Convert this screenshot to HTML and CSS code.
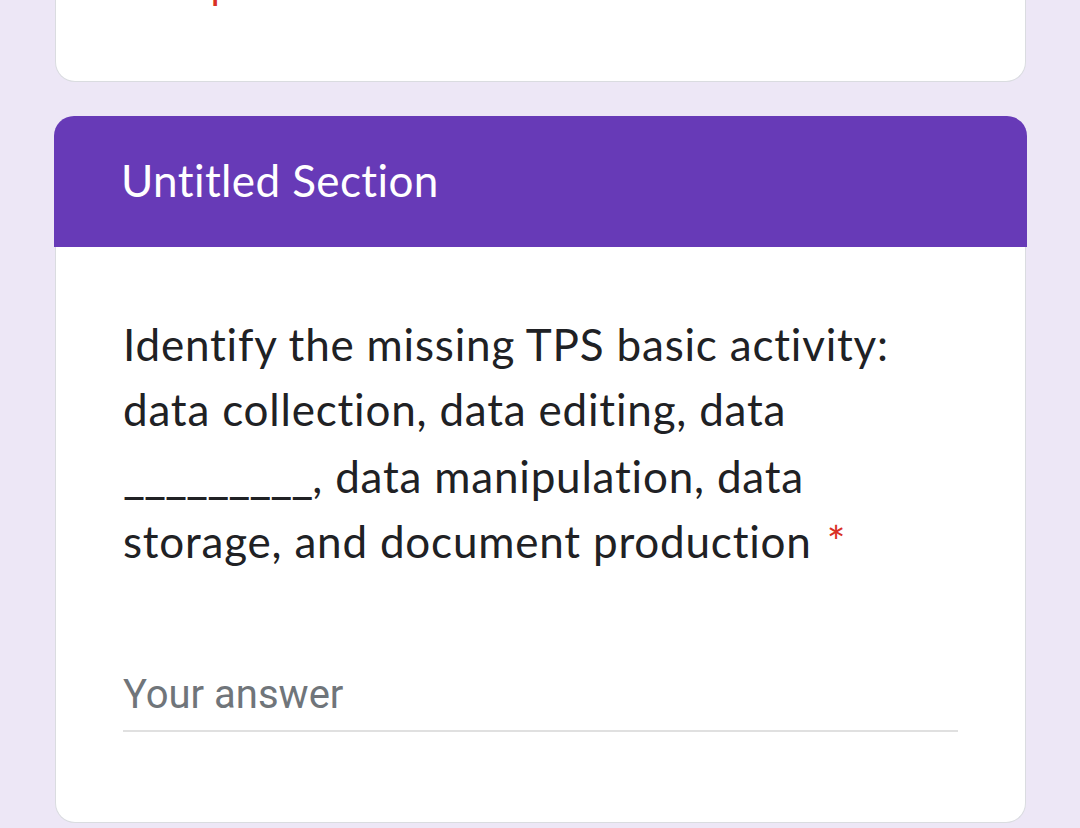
FILE: index.html
```html
<!DOCTYPE html>
<html lang="en">
<head>
<meta charset="utf-8">
<title>Untitled Section</title>
<link rel="stylesheet" href="styles.css">
</head>
<body>
<main class="form">
  <section class="card card-prev">
    <div class="error">
      <svg class="error-icon" viewBox="0 0 24 24" width="30" height="30" aria-hidden="true">
        <path fill="#d93025" d="M11 15h2v2h-2zm0-8h2v6h-2zm.99-5C6.47 2 2 6.48 2 12s4.47 10 9.99 10C17.52 22 22 17.52 22 12S17.52 2 11.99 2zM12 20c-4.42 0-8-3.58-8-8s3.58-8 8-8 8 3.58 8 8-3.58 8-8 8z"/>
      </svg>
      <span class="error-text">Required</span>
    </div>
  </section>

  <section class="card-section">
    <header class="section-header">
      <h1 class="section-title">Untitled Section</h1>
    </header>
    <div class="question">
      <div class="question-title">Identify the missing TPS basic activity: data collection, data editing, data <span class="blank">_________</span>, data manipulation, data storage, and document production <span class="required">*</span></div>
      <div class="answer">Your answer</div>
    </div>
  </section>
</main>
</body>
</html>
```

FILE: styles.css
```css
html, body {
  margin: 0;
  padding: 0;
}

body {
  background: #ede7f6;
  width: 1080px;
  height: 828px;
  overflow: hidden;
  font-family: "Lato", "Open Sans", sans-serif;
  font-variant-ligatures: none;
}

.form {
  display: flex;
  flex-direction: column;
  gap: 34px;
  width: 971px;
  margin: -34px 0 0 55px;
}

.card {
  background: #ffffff;
  border: 1px solid #dadce0;
  border-radius: 20px;
}

.card-prev {
  border-top: none;
  border-radius: 0 0 20px 20px;
  padding: 0 67px 76px;
  overflow: hidden;
}

.error {
  display: flex;
  align-items: center;
  height: 39px;
  line-height: 39px;
}

.error-icon {
  flex: none;
  margin-top: -30px;
}

.error-text {
  font-family: "Roboto", "Liberation Sans", sans-serif;
  font-size: 39px;
  color: #d93025;
}

.card-section {
  margin: 0 -1px;
}

.section-header {
  background: #673ab7;
  border-radius: 20px 20px 0 0;
  padding: 38px 67px 40px;
}

.section-title {
  margin: 0;
  font-weight: 400;
  font-size: 44px;
  line-height: 53px;
  letter-spacing: 0.4px;
  color: #ffffff;
}

.question {
  margin: 0 1px;
  background: #ffffff;
  border: 1px solid #dadce0;
  border-top: none;
  border-radius: 0 0 20px 20px;
  padding: 65px 67px 90px;
}

.question-title {
  max-width: 818px;
  font-size: 44px;
  line-height: 65px;
  letter-spacing: 0.8px;
  color: #202124;
}

.blank {
  letter-spacing: -1px;
  font-size: 48px;
}

.required {
  margin-left: 3px;
  color: #d93025;
}

.answer {
  margin-top: 98px;
  padding-bottom: 12px;
  border-bottom: 2px solid #e0e0e0;
  font-family: "Roboto", "Liberation Sans", sans-serif;
  font-size: 40px;
  line-height: 46px;
  color: #70757a;
}
```
